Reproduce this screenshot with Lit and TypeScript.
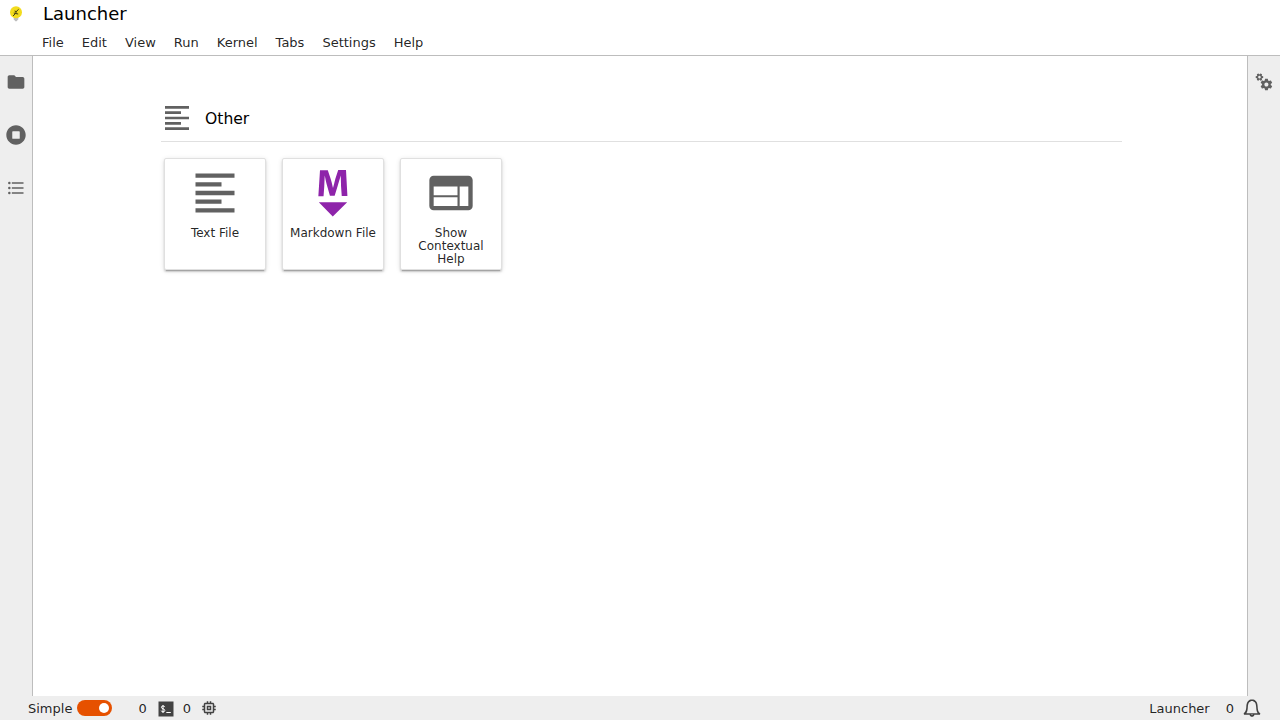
import { LitElement, html, css, svg } from "lit";
import { customElement } from "lit/decorators.js";

const textPath = "M15 15H3v2h12v-2zm0-8H3v2h12V7zM3 13h18v-2H3v2zm0 8h18v-2H3v2zM3 3v2h18V3H3z";
const markdownPath =
  "M5 14.9h12l-6.1 6zm9.4-6.8c0-1.3-.1-2.9-.1-4.5-.4 1.4-.9 2.9-1.3 4.3l-1.3 4.3h-2L8.5 7.9c-.4-1.3-.7-2.9-1-4.3-.1 1.6-.1 3.2-.2 4.6L7 12.4H4.8l.7-11h3.3L10 5c.4 1.2.7 2.7 1 3.9.3-1.2.7-2.6 1-3.9l1.2-3.7h3.3l.6 11h-2.4l-.3-4.2z";
const inspectorPath =
  "M20 4H4c-1.1 0-1.99.9-1.99 2L2 18c0 1.1.9 2 2 2h16c1.1 0 2-.9 2-2V6c0-1.1-.9-2-2-2zm-5 14H4v-4h11v4zm0-5H4V9h11v4zm5 5h-4V9h4v9z";
const folderPath =
  "M10 4H4c-1.1 0-1.99.9-1.99 2L2 18c0 1.1.9 2 2 2h16c1.1 0 2-.9 2-2V8c0-1.1-.9-2-2-2h-8l-2-2z";
const runningPath =
  "M256 8C119 8 8 119 8 256s111 248 248 248 248-111 248-248S393 8 256 8zm96 328c0 8.8-7.2 16-16 16H176c-8.8 0-16-7.2-16-16V176c0-8.8 7.2-16 16-16h160c8.8 0 16 7.2 16 16v160z";
const tocPath =
  "M7,5H21V7H7V5M7,13V11H21V13H7M4,4.5A1.5,1.5 0 0,1 5.5,6A1.5,1.5 0 0,1 4,7.5A1.5,1.5 0 0,1 2.5,6A1.5,1.5 0 0,1 4,4.5M4,10.5A1.5,1.5 0 0,1 5.5,12A1.5,1.5 0 0,1 4,13.5A1.5,1.5 0 0,1 2.5,12A1.5,1.5 0 0,1 4,10.5M7,19V17H21V19H7M4,16.5A1.5,1.5 0 0,1 5.5,18A1.5,1.5 0 0,1 4,19.5A1.5,1.5 0 0,1 2.5,18A1.5,1.5 0 0,1 4,16.5Z";
const gearLarge =
  "M14.9 17.45C16.25 17.45 17.35 16.35 17.35 15C17.35 13.65 16.25 12.55 14.9 12.55C13.54 12.55 12.45 13.65 12.45 15C12.45 16.35 13.54 17.45 14.9 17.45ZM20.1 15.68L21.58 16.84C21.71 16.95 21.75 17.13 21.66 17.29L20.26 19.71C20.17 19.86 20 19.92 19.83 19.86L18.09 19.16C17.73 19.44 17.33 19.67 16.91 19.85L16.64 21.7C16.62 21.87 16.47 22 16.3 22H13.5C13.32 22 13.18 21.87 13.15 21.7L12.89 19.85C12.46 19.67 12.07 19.44 11.71 19.16L9.96 19.86C9.81 19.92 9.62 19.86 9.54 19.71L8.14 17.29C8.05 17.13 8.09 16.95 8.22 16.84L9.7 15.68L9.65 15L9.7 14.31L8.22 13.16C8.09 13.05 8.05 12.86 8.14 12.71L9.54 10.29C9.62 10.13 9.81 10.07 9.96 10.13L11.71 10.84C12.07 10.56 12.46 10.32 12.89 10.15L13.15 8.29C13.18 8.13 13.32 8 13.5 8H16.3C16.47 8 16.62 8.13 16.64 8.29L16.91 10.15C17.33 10.32 17.73 10.56 18.09 10.84L19.83 10.13C20 10.07 20.17 10.13 20.26 10.29L21.66 12.71C21.75 12.86 21.71 13.05 21.58 13.16L20.1 14.31L20.15 15L20.1 15.68Z";
const gearSmall =
  "M7.33 7.44C8.08 7.01 8.34 6.05 7.9 5.3C7.47 4.55 6.51 4.28 5.75 4.72C5.39 4.93 5.13 5.27 5.02 5.68C4.91 6.08 4.97 6.51 5.18 6.87C5.61 7.63 6.58 7.88 7.33 7.44ZM9.66 4.8L10.87 4.95C10.96 4.98 11.04 5.07 11.04 5.19L11.04 6.99C11.05 7.1 10.96 7.2 10.86 7.21L9.66 7.38L9.24 8.13L9.67 9.26C9.71 9.36 9.67 9.48 9.57 9.53L8.02 10.43C7.91 10.49 7.79 10.47 7.72 10.38L6.99 9.43L6.11 9.43L5.35 10.39C5.29 10.47 5.17 10.49 5.07 10.45L3.51 9.53C3.41 9.48 3.38 9.36 3.41 9.26L3.86 8.14L3.62 7.77L3.42 7.38L2.23 7.21C2.13 7.19 2.04 7.1 2.04 6.99L2.04 5.19C2.04 5.07 2.12 4.98 2.22 4.97L3.42 4.79L3.87 4.03L3.41 2.92C3.37 2.81 3.41 2.7 3.52 2.64L5.07 1.74C5.17 1.68 5.29 1.71 5.36 1.79L6.12 2.73L6.98 2.74L7.72 1.79C7.79 1.7 7.92 1.68 8.01 1.74L9.57 2.65C9.67 2.71 9.7 2.83 9.68 2.92L9.21 4.03L9.66 4.8Z";
const kernelPath =
  "M15 9H9v6h6V9zm-2 4h-2v-2h2v2zm8-2V9h-2V7c0-1.1-.9-2-2-2h-2V3h-2v2h-2V3H9v2H7c-1.1 0-2 .9-2 2v2H3v2h2v2H3v2h2v2c0 1.1.9 2 2 2h2v2h2v-2h2v2h2v-2h2c1.1 0 2-.9 2-2v-2h2v-2h-2v-2h2zm-4 6H7V7h10v10z";
const bellPath =
  "M8 0.29c-1.4 0-2.7 0.73-3.6 1.8-1.2 1.5-1.4 3.4-1.5 5.2-0.18 2.2-0.44 4-2.3 5.3l0.28 1.3h5c0.026 0.66 0.32 1.1 0.71 1.5 0.84 0.61 2 0.61 2.8 0 0.52-0.4 0.6-1 0.71-1.5h5l0.28-1.3c-1.9-0.97-2.2-3.3-2.3-5.3-0.13-1.8-0.26-3.7-1.5-5.2-0.85-1-2.2-1.8-3.6-1.8zm0 1.4c0.88 0 1.9 0.55 2.5 1.3 0.88 1.1 1.1 2.7 1.2 4.4 0.13 1.7 0.23 3.6 1.3 5.2h-10c1.1-1.6 1.2-3.4 1.3-5.2 0.13-1.7 0.3-3.3 1.2-4.4 0.59-0.72 1.6-1.3 2.5-1.3zm-0.74 12h1.5c0 0.73-1.5 0.73-1.5 0z";

const icon = (size: number, box: number, fill: string, ...paths: string[]) => html`
  <svg width=${size} height=${size} viewBox="0 0 ${box} ${box}" fill=${fill}>
    ${paths.map((d) => svg`<path d=${d}></path>`)}
  </svg>
`;

const menus = ["File", "Edit", "View", "Run", "Kernel", "Tabs", "Settings", "Help"];
const cards = [
  { label: "Text File", box: 24, fill: "#616161", path: textPath },
  { label: "Markdown File", box: 22, fill: "#8e24aa", path: markdownPath },
  { label: "Show Contextual Help", box: 24, fill: "#616161", path: inspectorPath },
];

@customElement("app-root")
export class AppRoot extends LitElement {
  static styles = css`
    :host {
      display: flex;
      flex-direction: column;
      width: 100%;
      height: 100vh;
      overflow: hidden;
      background: #fff;
      color: rgba(0, 0, 0, 0.87);
      font: 13px/16px "DejaVu Sans", sans-serif;
    }
    * {
      box-sizing: border-box;
    }
    svg {
      display: block;
      flex: none;
    }
    .title {
      display: flex;
      align-items: center;
      height: 28px;
      padding-left: 8px;
      gap: 19px;
    }
    h1 {
      margin: 0;
      font-size: 18px;
      font-weight: 400;
      line-height: 28px;
      color: #000;
    }
    .menu {
      display: flex;
      height: 28px;
      padding-left: 33px;
      border-bottom: 1px solid #bdbdbd;
      line-height: 29px;
    }
    .menu span {
      padding: 0 9px;
    }
    .body {
      flex: 1;
      min-height: 0;
      display: flex;
    }
    .side {
      width: 33px;
      background: #eee;
      display: flex;
      flex-direction: column;
      align-items: center;
    }
    .left {
      border-right: 1px solid #bdbdbd;
    }
    .right {
      border-left: 1px solid #bdbdbd;
    }
    .tab {
      height: 53px;
      padding-top: 16px;
    }
    main {
      flex: 1;
      padding: 43px 125px 0 128px;
    }
    .section {
      display: flex;
      align-items: center;
      height: 43px;
      padding-bottom: 4px;
      border-bottom: 1px solid #e0e0e0;
      gap: 12px;
    }
    h2 {
      margin: 0;
      padding-top: 2px;
      font-size: 15.6px;
      font-weight: 400;
      line-height: 20px;
      color: #000;
    }
    .cards {
      display: flex;
      gap: 16px;
      padding: 16px 3px;
    }
    .card {
      width: 102px;
      height: 112px;
      border: 1px solid #e0e0e0;
      border-radius: 2px;
      background: #fff;
      box-shadow: 0 3px 1px -2px rgba(0, 0, 0, 0.2), 0 2px 2px 0 rgba(0, 0, 0, 0.14),
        0 1px 5px 0 rgba(0, 0, 0, 0.12);
      display: flex;
      flex-direction: column;
      align-items: center;
      padding-top: 8px;
      gap: 8px;
    }
    .card p {
      margin: 0;
      padding: 0 4px;
      font-size: 12px;
      line-height: 13px;
      text-align: center;
    }
    .status {
      height: 24px;
      background: #eee;
      display: flex;
      align-items: center;
      padding: 0 19px 0 28px;
      line-height: 24px;
    }
    .status span {
      padding-top: 2px;
    }
    .switch {
      width: 35px;
      height: 16px;
      margin: 0 26px 0 5px;
      border-radius: 8px;
      background: #e65100;
      display: flex;
      align-items: center;
      justify-content: flex-end;
      padding-right: 3px;
    }
    .knob {
      width: 10px;
      height: 10px;
      border-radius: 50%;
      background: #fff;
    }
    .terminal {
      margin: 2px 9px 0 11px;
    }
    .kernel {
      margin-left: 9px;
    }
    .count {
      margin: 0 9px 0 16px;
    }
    .fill {
      flex: 1;
    }
  `;

  render() {
    return html`
      <div class="title">
        <svg width="16" height="16" viewBox="0 0 16 16">
          <path d="M5.7 11h4.6v2.2q0 .6-.8.8l-.5.9q-1 .6-2 0l-.5-.9q-.8-.2-.8-.8z" fill="#bdbdbd"></path>
          <circle cx="8" cy="6.3" r="6" fill="#f3dc1d"></circle>
          <path d="M10.6 3.3L8.2 5.6 6.6 5M8.4 5.4L7.6 7.5 10.2 8M7.6 7.5L5 10M7.6 7.5L5.8 7" fill="none" stroke="#3b3810" stroke-width="1"></path>
        </svg>
        <h1>Launcher</h1>
      </div>
      <nav class="menu">${menus.map((m) => html`<span>${m}</span>`)}</nav>
      <div class="body">
        <aside class="side left">
          <div class="tab">${icon(20, 24, "#616161", folderPath)}</div>
          <div class="tab">${icon(20, 512, "#616161", runningPath)}</div>
          <div class="tab">${icon(20, 24, "#616161", tocPath)}</div>
        </aside>
        <main>
          <div class="section">
            ${icon(32, 24, "#616161", textPath)}
            <h2>Other</h2>
          </div>
          <div class="cards">
            ${cards.map(
              (c) => html`<div class="card">${icon(52, c.box, c.fill, c.path)}<p>${c.label}</p></div>`
            )}
          </div>
        </main>
        <aside class="side right">
          <div class="tab">${icon(20, 24, "#616161", gearLarge, gearSmall)}</div>
        </aside>
      </div>
      <footer class="status">
        <span>Simple</span>
        <div class="switch"><div class="knob"></div></div>
        <span>0</span>
        <svg class="terminal" width="16" height="16" viewBox="0 0 16 16" fill="none">
          <rect x=".5" y=".5" width="15" height="15" fill="#424242"></rect>
          <path d="M6.8 6.1Q6.5 5 5 5 3.4 5 3.4 6.3 3.4 7.4 5 7.8 6.8 8.2 6.8 9.5 6.8 10.8 5 10.8 3.4 10.8 3.2 9.6M5 4V12" stroke="#fff" stroke-width="1"></path>
          <path d="M8.3 11.5h4.5" stroke="#fff" stroke-width="1"></path>
        </svg>
        <span>0</span>
        <div class="kernel">${icon(18, 24, "#424242", kernelPath)}</div>
        <div class="fill"></div>
        <span>Launcher</span>
        <span class="count">0</span>
        ${icon(18, 16, "#424242", bellPath)}
      </footer>
    `;
  }
}
